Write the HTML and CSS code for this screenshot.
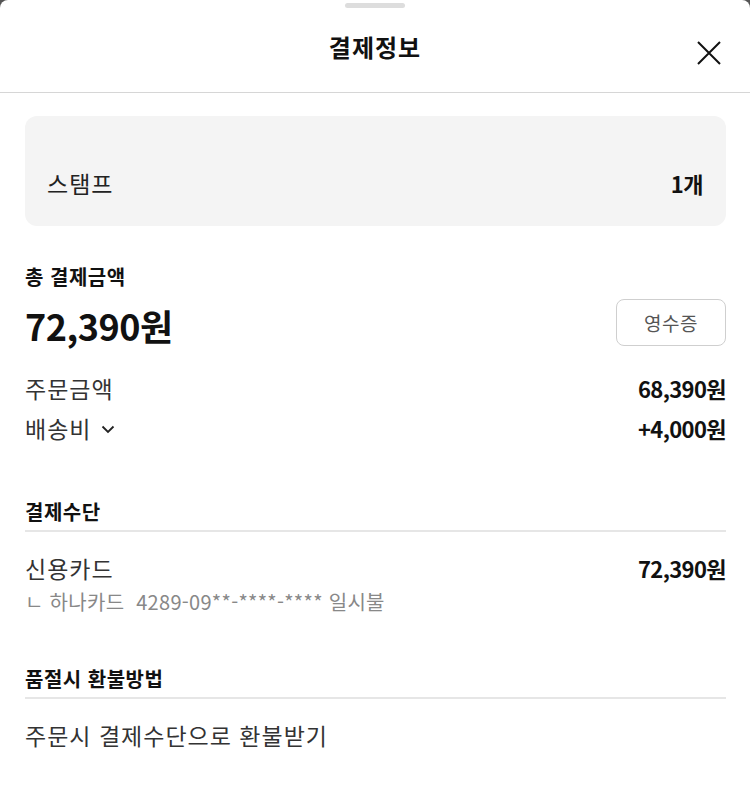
FILE: index.html
```html
<!DOCTYPE html>
<html lang="ko">
<head>
<meta charset="utf-8">
<link rel="stylesheet" href="styles.css">
</head>
<body>
<div class="sheet">
  <div class="handle"></div>
  <header class="header">
    <h1 class="title">결제정보</h1>
    <button class="close" aria-label="닫기">
      <svg width="24" height="24" viewBox="0 0 24 24"><path d="M1 1L23 23M23 1L1 23" stroke="#111" stroke-width="2" fill="none"/></svg>
    </button>
  </header>
  <main class="content">
    <div class="stamp">
      <span class="stamp-label">스탬프</span>
      <span class="stamp-value">1개</span>
    </div>

    <section class="total">
      <h2 class="sec-title">총 결제금액</h2>
      <div class="total-row">
        <span class="total-amount">72,390원</span>
        <button class="receipt">영수증</button>
      </div>
      <div class="row first">
        <span class="label">주문금액</span>
        <span class="value">68,390원</span>
      </div>
      <div class="row">
        <span class="label">배송비 <svg class="chev" width="14" height="9" viewBox="0 0 14 9"><path d="M1.5 1.5L7 7L12.5 1.5" stroke="#222" stroke-width="1.8" fill="none"/></svg></span>
        <span class="value">+4,000원</span>
      </div>
    </section>

    <section class="block pay">
      <h2 class="sec-title ruled">결제수단</h2>
      <div class="row">
        <span class="label">신용카드</span>
        <span class="value">72,390원</span>
      </div>
      <div class="card-info">ㄴ 하나카드&nbsp;&nbsp;4289-09**-****-**** 일시불</div>
    </section>

    <section class="block refund">
      <h2 class="sec-title ruled">품절시 환불방법</h2>
      <div class="plain">주문시 결제수단으로 환불받기</div>
    </section>
  </main>
</div>
</body>
</html>
```
FILE: styles.css
```css
html, body {
  margin: 0;
  padding: 0;
  background: #555;
}
body {
  font-family: "Noto Sans CJK KR", "Noto Sans", sans-serif;
  color: #111;
}
.sheet {
  background: #fff;
  width: 750px;
  height: 792px;
  border-radius: 8px 8px 0 0;
  position: relative;
  overflow: hidden;
}
.handle {
  width: 60px;
  height: 5px;
  border-radius: 3px;
  background: #ddd;
  margin: 3px auto 0;
}
.header {
  height: 84px;
  display: flex;
  align-items: center;
  justify-content: center;
  border-bottom: 1px solid #d6d6d6;
  position: relative;
}
.title {
  margin: -8px 0 0;
  font-size: 24px;
  font-weight: 700;
  letter-spacing: 1px;
}
.close {
  position: absolute;
  right: 29px;
  top: 33px;
  background: none;
  border: 0;
  padding: 0;
  width: 24px;
  height: 24px;
  display: flex;
}
.content {
  padding: 23px 24px 0 25px;
}
.stamp {
  height: 110px;
  background: #f4f4f4;
  border-radius: 12px;
  display: flex;
  align-items: center;
  justify-content: space-between;
  padding: 23px 23px 0 22px;
  box-sizing: border-box;
}
.stamp-label {
  font-size: 23px;
  color: #222;
  letter-spacing: 1px;
}
.stamp-value {
  font-size: 22px;
  font-weight: 700;
  letter-spacing: -0.5px;
}
.total {
  padding-top: 37px;
}
.sec-title {
  margin: 0;
  font-size: 20px;
  font-weight: 700;
  line-height: 28px;
  letter-spacing: 0.5px;
}
.total-row {
  display: flex;
  justify-content: space-between;
  align-items: center;
  margin-top: 9px;
  height: 50px;
}
.total-amount {
  font-size: 36px;
  font-weight: 700;
  letter-spacing: -0.5px;
  line-height: 44px;
}
.receipt {
  width: 110px;
  height: 47px;
  border: 1px solid #cfcfcf;
  border-radius: 8px;
  background: #fff;
  font-family: inherit;
  font-size: 19px;
  letter-spacing: 0.5px;
  color: #555;
  margin: 0 0 6px;
  padding: 0;
}
.row {
  display: flex;
  justify-content: space-between;
  align-items: center;
  height: 40px;
}
.row.first {
  margin-top: 18px;
}
.label {
  font-size: 23px;
  color: #333;
  letter-spacing: 1px;
  display: flex;
  align-items: center;
  gap: 10px;
}
.chev {
  margin-top: 2px;
}
.value {
  font-size: 22px;
  font-weight: 700;
  letter-spacing: -0.6px;
}
.block.pay {
  padding-top: 50px;
}
.ruled {
  padding-bottom: 4px;
  border-bottom: 2px solid #e6e6e6;
  margin-bottom: 16px;
}
.card-info {
  font-size: 20px;
  color: #888;
  line-height: 28px;
  letter-spacing: 0.3px;
  margin-top: 0;
}
.block.refund {
  padding-top: 49px;
}
.plain {
  font-size: 23px;
  color: #333;
  letter-spacing: 1px;
  line-height: 40px;
}
```
